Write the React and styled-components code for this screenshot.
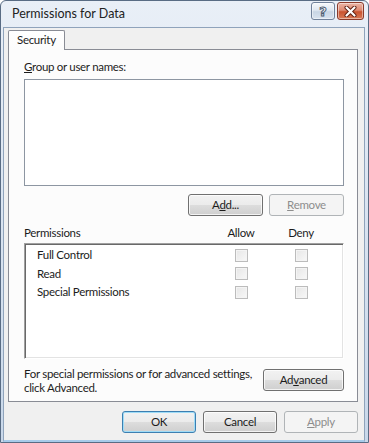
import React from "react";
import styled, { createGlobalStyle } from "styled-components";

const FONT = `Lato, "Liberation Sans", Arial, sans-serif`;

const GlobalStyle = createGlobalStyle`
  html, body {
    margin: 0;
    padding: 0;
    background: #ffffff;
  }
  body {
    font-family: ${FONT};
    font-size: 11.5px;
    letter-spacing: -0.3px;
    color: #1c1c1c;
  }
  * {
    box-sizing: border-box;
  }
`;

const Window = styled.div`
  width: 369px;
  height: 443px;
  border: 1px solid #596c84;
  border-radius: 6px 6px 0 0;
  background: linear-gradient(#e9eff7, #c9d8ea);
  display: flex;
  flex-direction: column;
  overflow: hidden;
`;

const TitleBar = styled.div`
  height: 26px;
  flex: none;
  display: flex;
  align-items: flex-start;
  padding: 0 4px 0 11px;
`;

const Title = styled.div`
  flex: 1;
  padding-top: 5px;
  font-size: 12.5px;
  letter-spacing: 0;
  line-height: 16px;
  color: #222222;
  white-space: nowrap;
`;

const CaptionButtons = styled.div`
  display: flex;
  gap: 2px;
  margin-top: 1px;
`;

const CaptionButton = styled.div`
  width: ${(p) => p.$w}px;
  height: 18px;
  border: 1px solid ${(p) => (p.$close ? "#8a3a2a" : "#70819a")};
  border-radius: 3px;
  display: flex;
  align-items: center;
  justify-content: center;
  background: ${(p) =>
    p.$close
      ? "linear-gradient(#ebb5a6, #de8a72 45%, #c9532f 55%, #d87a57)"
      : "linear-gradient(#f6f9fc, #dfe7f1 45%, #c8d5e4 55%, #d9e3ef)"};
  box-shadow: inset 0 0 0 1px rgba(255, 255, 255, 0.45);
`;

const HelpGlyph = styled.span`
  font-family: "DejaVu Sans", sans-serif;
  font-weight: bold;
  font-size: 13px;
  line-height: 13px;
  letter-spacing: 0;
  color: #ffffff;
  -webkit-text-stroke: 1px #4d5d72;
`;

const Client = styled.div`
  flex: 1;
  margin: 0 3px 0 2px;
  background: #f0f0f0;
  border-top: 1px solid #8fa3bb;
  border-left: 1px solid #8fa3bb;
  border-right: 1px solid #8fa3bb;
  border-bottom: 2px solid #a7cbea;
  padding: 2px 6px 0 4px;
  display: flex;
  flex-direction: column;
`;

const TabStrip = styled.div`
  display: flex;
`;

const Tab = styled.div`
  position: relative;
  z-index: 1;
  height: 20px;
  margin-bottom: -1px;
  padding: 0 8px;
  line-height: 18px;
  border: 1px solid #898c95;
  border-bottom: none;
  border-radius: 2px 2px 0 0;
  background: linear-gradient(#ffffff, #fcfcfc);
`;

const Panel = styled.div`
  height: 353px;
  border: 1px solid #898c95;
  background: #fcfcfc;
  padding: 9px 13px 0 15px;
  display: flex;
  flex-direction: column;
`;

const Label = styled.div`
  line-height: 16px;
  white-space: nowrap;
`;

const ListBox = styled.div`
  margin-top: 4px;
  height: 107px;
  border: 1px solid #8d96a2;
  background: #ffffff;
`;

const ButtonRow = styled.div`
  display: flex;
  justify-content: flex-end;
  gap: 6px;
  margin-top: 8px;
`;

const Button = styled.button`
  width: ${(p) => p.$w || 75}px;
  height: 22px;
  padding: 0;
  margin: 0;
  font: inherit;
  letter-spacing: inherit;
  line-height: 18px;
  color: ${(p) => (p.disabled ? "#8d8d8d" : "#1c1c1c")};
  border: 1px solid
    ${(p) => (p.disabled ? "#b0b4b7" : p.$default ? "#3c7fb1" : "#707070")};
  border-radius: 3px;
  background: ${(p) =>
    p.disabled
      ? "#f4f4f4"
      : "linear-gradient(#f2f2f2 0%, #ebebeb 50%, #dddddd 50%, #cfcfcf 100%)"};
  box-shadow: ${(p) =>
    p.disabled
      ? "none"
      : p.$default
      ? "inset 0 0 0 1px #9fdcf7"
      : "inset 0 0 0 1px rgba(255,255,255,0.75)"};
`;

const HeaderRow = styled.div`
  display: flex;
  margin-top: 9px;
  padding-right: 13px;
  line-height: 16px;
`;

const NameCell = styled.div`
  flex: 1;
  white-space: nowrap;
`;

const CheckCell = styled.div`
  width: 60px;
  display: flex;
  justify-content: center;
  align-items: center;
`;

const PermList = styled.div`
  margin-top: 2px;
  height: 116px;
  border-top: 1px solid #a0a0a0;
  border-left: 1px solid #a0a0a0;
  border-right: 1px solid #ffffff;
  border-bottom: 1px solid #ffffff;
  box-shadow: inset 1px 1px 0 #696969, inset -1px -1px 0 #e3e3e3;
  background: #ffffff;
  padding: 2px 12px 0 12px;
`;

const PermRow = styled.div`
  display: flex;
  height: 18.5px;
  line-height: 18px;
`;

const CheckBox = styled.span`
  width: 13px;
  height: 13px;
  border: 1px solid #bcbcbc;
  background: linear-gradient(135deg, #e6e6e6, #f8f8f8);
  box-shadow: inset 0 0 0 1px #f4f4f4;
`;

const Footer = styled.div`
  display: flex;
  align-items: flex-start;
  margin-top: 8px;
`;

const Note = styled.div`
  flex: 1;
  line-height: 14px;
  white-space: nowrap;
`;

const AdvancedButton = styled(Button)`
  margin-top: 2px;
`;

const DialogButtons = styled.div`
  display: flex;
  justify-content: flex-end;
  gap: 7px;
  margin-top: 9px;
`;

const permissions = ["Full Control", "Read", "Special Permissions"];

export default function App() {
  return (
    <>
      <GlobalStyle />
      <Window>
        <TitleBar>
          <Title>Permissions for Data</Title>
          <CaptionButtons>
            <CaptionButton $w={24}>
              <HelpGlyph>?</HelpGlyph>
            </CaptionButton>
            <CaptionButton $w={27} $close>
              <svg width="13" height="11" viewBox="0 0 13 11">
                <path d="M2.5 1.5 L10.5 9.5 M10.5 1.5 L2.5 9.5" stroke="#5c1d10" strokeWidth="4" strokeLinecap="round" />
                <path d="M2.5 1.5 L10.5 9.5 M10.5 1.5 L2.5 9.5" stroke="#ffffff" strokeWidth="2.2" strokeLinecap="round" />
              </svg>
            </CaptionButton>
          </CaptionButtons>
        </TitleBar>
        <Client>
          <TabStrip>
            <Tab>Security</Tab>
          </TabStrip>
          <Panel>
            <Label>
              <u>G</u>roup or user names:
            </Label>
            <ListBox />
            <ButtonRow>
              <Button>
                A<u>d</u>d...
              </Button>
              <Button disabled>
                <u>R</u>emove
              </Button>
            </ButtonRow>
            <HeaderRow>
              <NameCell>Permissions</NameCell>
              <CheckCell>Allow</CheckCell>
              <CheckCell>Deny</CheckCell>
            </HeaderRow>
            <PermList>
              {permissions.map((name) => (
                <PermRow key={name}>
                  <NameCell>{name}</NameCell>
                  <CheckCell>
                    <CheckBox />
                  </CheckCell>
                  <CheckCell>
                    <CheckBox />
                  </CheckCell>
                </PermRow>
              ))}
            </PermList>
            <Footer>
              <Note>
                For special permissions or for advanced settings,
                <br />
                click Advanced.
              </Note>
              <AdvancedButton $w={81}>
                Ad<u>v</u>anced
              </AdvancedButton>
            </Footer>
          </Panel>
          <DialogButtons>
            <Button $w={74} $default>
              OK
            </Button>
            <Button $w={74}>Cancel</Button>
            <Button $w={74} disabled>
              <u>A</u>pply
            </Button>
          </DialogButtons>
        </Client>
      </Window>
    </>
  );
}
